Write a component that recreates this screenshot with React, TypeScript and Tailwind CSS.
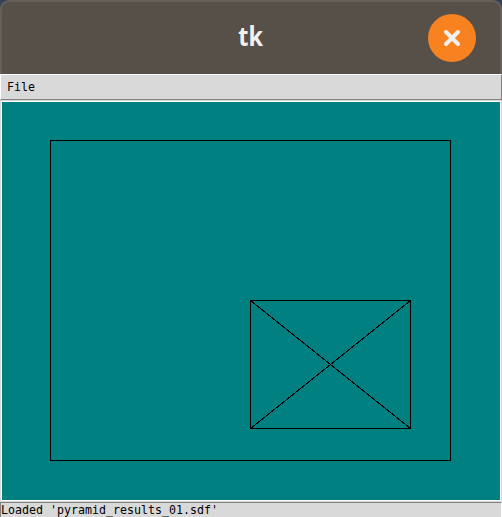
const mono = "font-['DejaVu_Sans_Mono',monospace] text-[11.63px] leading-[13px] text-black whitespace-pre";

function TitleBar() {
  return (
    <header className="h-[74px] bg-[#34425a]">
      <div className="grid h-full grid-cols-[1fr_auto_1fr] items-center rounded-t-[9px] border-x-2 border-t-2 border-[#665e59] bg-[#575049]">
        <span />
        <h1 className="-mt-1 scale-x-90 font-['Open_Sans',sans-serif] text-[26px] leading-none font-bold text-[#f2f1f0]">tk</h1>
        <button
          aria-label="Close"
          className="mr-6 flex size-12 items-center justify-center justify-self-end rounded-full bg-[#f98220]"
        >
          <svg width="18" height="18" viewBox="0 0 18 18" stroke="#f2f1f0" strokeWidth="4" strokeLinecap="round">
            <path d="M3 3L15 15M15 3L3 15" />
          </svg>
        </button>
      </div>
    </header>
  );
}

function Canvas() {
  return (
    <svg className="block" width="498" height="398" shapeRendering="crispEdges" fill="none" stroke="black">
      <rect width="498" height="398" fill="#008080" stroke="none" />
      <rect x="48.5" y="38.5" width="400" height="320" />
      <rect x="248.5" y="198.5" width="160" height="128" />
      <path d="M248.5 198.5L408.5 326.5M408.5 198.5L248.5 326.5" />
    </svg>
  );
}

export default function App() {
  return (
    <div className="h-[517px] w-[502px] overflow-hidden bg-[#d9d9d9]">
      <TitleBar />
      <nav className="h-[26px] border border-t-white border-l-white border-r-[#828282] border-b-[#828282] bg-[#d9d9d9] pt-[6px] pl-[6px]">
        <span className={`${mono} block`}>File</span>
      </nav>
      <main className="h-[402px] border border-[#d9d9d9]">
        <div className="border border-white">
          <Canvas />
        </div>
      </main>
      <footer className="h-[15px] border-t border-l border-r border-t-[#828282] border-r-white border-l-[#828282] bg-[#d9d9d9] pt-px">
        <span className={`${mono} block`}>Loaded 'pyramid_results_01.sdf'</span>
      </footer>
    </div>
  );
}
